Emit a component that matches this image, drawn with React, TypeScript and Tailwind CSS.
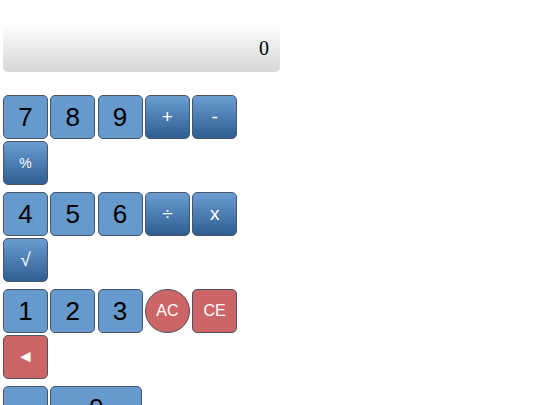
import React from 'react';

type Key = { label: string; kind: 'num' | 'op' | 'red' | 'ac'; wide?: boolean; small?: boolean };

const groups: Key[][] = [
  [
    { label: '7', kind: 'num' },
    { label: '8', kind: 'num' },
    { label: '9', kind: 'num' },
    { label: '+', kind: 'op' },
    { label: '-', kind: 'op' },
    { label: '%', kind: 'op', small: true },
  ],
  [
    { label: '4', kind: 'num' },
    { label: '5', kind: 'num' },
    { label: '6', kind: 'num' },
    { label: '÷', kind: 'op' },
    { label: 'x', kind: 'op' },
    { label: '√', kind: 'op' },
  ],
  [
    { label: '1', kind: 'num' },
    { label: '2', kind: 'num' },
    { label: '3', kind: 'num' },
    { label: 'AC', kind: 'ac' },
    { label: 'CE', kind: 'red' },
    { label: '◄', kind: 'red', small: true },
  ],
  [
    { label: '', kind: 'num' },
    { label: '0', kind: 'num', wide: true },
  ],
];

function CalcKey({ k }: { k: Key }) {
  const base =
    'h-[44px] mr-[2.3px] mb-[2px] flex items-center justify-center border border-[#4a5563] font-["Liberation_Sans",Arial,sans-serif]';
  const width = k.wide ? 'w-[92px]' : 'w-[45px]';
  let style = '';
  if (k.kind === 'num') style = 'bg-[#6699cc] text-black text-[26px] rounded-[5px]';
  if (k.kind === 'op')
    style = `bg-gradient-to-b from-[#6b9dd3] to-[#2f5e92] text-white rounded-[5px] ${k.small ? 'text-[14px]' : 'text-[19px]'}`;
  if (k.kind === 'red') style = `bg-[#cc6666] text-white rounded-[5px] ${k.small ? 'text-[17px]' : 'text-[16px]'}`;
  if (k.kind === 'ac') style = 'bg-[#cc6666] text-white text-[16px] rounded-full';
  return <button className={`${base} ${width} ${style}`}>{k.label}</button>;
}

export default function App() {
  return (
    <main className="min-h-screen bg-white pt-[24px] pl-[3px]">
      <div className="w-[277px] h-[48px] rounded-[5px] bg-gradient-to-b from-white to-[#d6d6d6] flex items-center justify-end pr-[11px]">
        <span className="text-[20px] text-black font-['Liberation_Serif','Times_New_Roman',serif]">0</span>
      </div>

      <div className="mt-[23px] flex flex-col gap-[5px]">
        {groups.map((g, i) => (
          <div key={i} className="flex flex-wrap w-[240px]">
            {g.map((k, j) => (
              <CalcKey key={j} k={k} />
            ))}
          </div>
        ))}
      </div>
    </main>
  );
}
